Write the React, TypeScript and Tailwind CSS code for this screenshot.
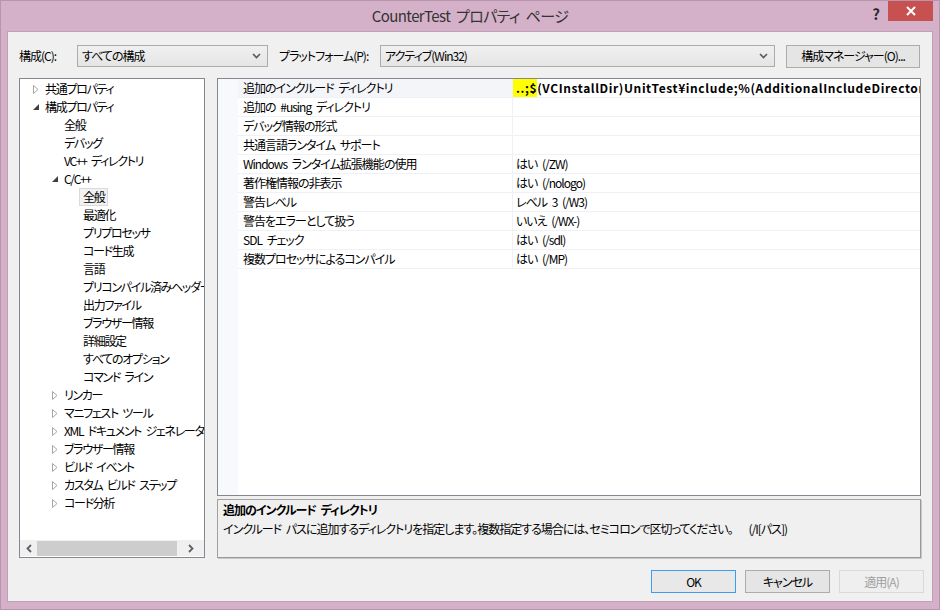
import { ReactNode } from 'react';

type TreeItem = {
  label: string;
  level: 0 | 1 | 2;
  expander?: 'open' | 'closed';
  selected?: boolean;
};

const treeItems: TreeItem[] = [
  { label: '共通プロパティ', level: 0, expander: 'closed' },
  { label: '構成プロパティ', level: 0, expander: 'open' },
  { label: '全般', level: 1 },
  { label: 'デバッグ', level: 1 },
  { label: 'VC++ ディレクトリ', level: 1 },
  { label: 'C/C++', level: 1, expander: 'open' },
  { label: '全般', level: 2, selected: true },
  { label: '最適化', level: 2 },
  { label: 'プリプロセッサ', level: 2 },
  { label: 'コード生成', level: 2 },
  { label: '言語', level: 2 },
  { label: 'プリコンパイル済みヘッダー', level: 2 },
  { label: '出力ファイル', level: 2 },
  { label: 'ブラウザー情報', level: 2 },
  { label: '詳細設定', level: 2 },
  { label: 'すべてのオプション', level: 2 },
  { label: 'コマンド ライン', level: 2 },
  { label: 'リンカー', level: 1, expander: 'closed' },
  { label: 'マニフェスト ツール', level: 1, expander: 'closed' },
  { label: 'XML ドキュメント ジェネレータ', level: 1, expander: 'closed' },
  { label: 'ブラウザー情報', level: 1, expander: 'closed' },
  { label: 'ビルド イベント', level: 1, expander: 'closed' },
  { label: 'カスタム ビルド ステップ', level: 1, expander: 'closed' },
  { label: 'コード分析', level: 1, expander: 'closed' },
];

const indentClass = ['pl-[13px]', 'pl-[32px]', 'pl-[51px]'];

const properties: { name: string; value: ReactNode }[] = [
  {
    name: '追加のインクルード ディレクトリ',
    value: (
      <span className="font-bold tracking-[0.6px]">
        <span className="-ml-[8px] bg-[#ffff00] py-[2px] pl-[8px]">..;$</span>
        (VCInstallDir)UnitTest¥include;%(AdditionalIncludeDirectories)
      </span>
    ),
  },
  { name: '追加の #using ディレクトリ', value: '' },
  { name: 'デバッグ情報の形式', value: '' },
  { name: '共通言語ランタイム サポート', value: '' },
  { name: 'Windows ランタイム拡張機能の使用', value: 'はい (/ZW)' },
  { name: '著作権情報の非表示', value: 'はい (/nologo)' },
  { name: '警告レベル', value: 'レベル 3 (/W3)' },
  { name: '警告をエラーとして扱う', value: 'いいえ (/WX-)' },
  { name: 'SDL チェック', value: 'はい (/sdl)' },
  { name: '複数プロセッサによるコンパイル', value: 'はい (/MP)' },
];

const Chevron = () => (
  <svg width="9" height="6" viewBox="0 0 9 6" className="shrink-0">
    <path d="M1 1 L4.5 4.5 L8 1" fill="none" stroke="#5a5a5a" strokeWidth="1.6" />
  </svg>
);

const Expander = ({ kind }: { kind?: 'open' | 'closed' }) => (
  <span className="flex w-[12px] shrink-0 items-center">
    {kind === 'closed' && (
      <svg width="6" height="9" viewBox="0 0 6 9">
        <path d="M0.5 0.5 L5 4.5 L0.5 8.5 Z" fill="none" stroke="#a6a6a6" strokeWidth="1" />
      </svg>
    )}
    {kind === 'open' && (
      <svg width="6" height="6" viewBox="0 0 6 6">
        <path d="M6 0 L6 6 L0 6 Z" fill="#404040" />
      </svg>
    )}
  </span>
);

const Combo = ({ text, width }: { text: string; width: string }) => (
  <div
    className={`flex h-[22px] ${width} items-center justify-between border border-[#acacac] bg-gradient-to-b from-[#f0f0f0] to-[#e5e5e5] pl-[4px] pr-[6px]`}
  >
    <span>{text}</span>
    <Chevron />
  </div>
);

const DialogButton = ({ children, variant }: { children: ReactNode; variant?: 'default' | 'disabled' }) => (
  <div
    className={`flex h-[23px] w-[85px] items-center justify-center border ${
      variant === 'default'
        ? 'border-[#3c9ef0] bg-[#e8e8e8] text-black'
        : variant === 'disabled'
          ? 'border-[#d9d9d9] bg-[#efefef] text-[#a0a0a0]'
          : 'border-[#acacac] bg-[#e5e5e5] text-black'
    }`}
  >
    {children}
  </div>
);

export default function App() {
  return (
    <div className="flex h-[610px] w-[940px] flex-col border border-[#b995ad] bg-[#d4b1c8] font-['Noto_Sans_CJK_JP',sans-serif] text-[12px] leading-none tracking-[-1px] text-black [font-feature-settings:'palt'] [word-spacing:3px]">
      {/* Caption bar */}
      <div className="relative h-[30px] shrink-0">
        <div className="pt-[7px] text-center text-[15px] tracking-[-0.6px] text-[#333333]">CounterTest プロパティ ページ</div>
        <div className="absolute right-[6px] top-0 flex items-start">
          <span className="mr-[9px] mt-[5px] text-[15px] font-bold text-[#2a2a2a]">?</span>
          <div className="flex h-[20px] w-[45px] items-center justify-center bg-[#c75050]">
            <svg width="10" height="10" viewBox="0 0 10 10">
              <path d="M1 1 L9 9 M9 1 L1 9" stroke="#ffffff" strokeWidth="2" />
            </svg>
          </div>
        </div>
      </div>

      {/* Client area */}
      <div className="mx-[6px] mb-[7px] flex min-w-0 flex-1 flex-col border border-[#bfa0b4] bg-[#f0f0f0] px-[11px] pt-[12px]">
        <div className="flex h-[24px] items-center whitespace-nowrap">
          <span className="w-[58px]">構成(C):</span>
          <Combo text="すべての構成" width="w-[191px]" />
          <span className="ml-[11px] w-[101px]">プラットフォーム(P):</span>
          <Combo text="アクティブ(Win32)" width="w-[395px]" />
          <div className="ml-[11px] flex h-[23px] w-[134px] items-center justify-center border border-[#acacac] bg-[#e5e5e5]">
            構成マネージャー(O)...
          </div>
        </div>

        <div className="mt-[10px] flex h-[480px] gap-[12px]">
          {/* Category tree */}
          <div className="flex w-[186px] shrink-0 flex-col border border-[#828790] bg-white">
            <div className="flex-1 overflow-hidden pt-[1px] tracking-[-1.3px]">
              {treeItems.map((item, i) => (
                <div key={i} className={`flex h-[18px] items-center whitespace-nowrap ${indentClass[item.level]}`}>
                  <Expander kind={item.expander} />
                  {item.selected ? (
                    <span className="-ml-[4px] border border-[#dadada] bg-[#f2f2f2] px-[3px] py-[2px]">{item.label}</span>
                  ) : (
                    <span>{item.label}</span>
                  )}
                </div>
              ))}
            </div>
            <div className="mb-[1px] flex h-[16px] items-center bg-[#f0f0f0]">
              <span className="flex w-[17px] justify-center">
                <svg width="6" height="9" viewBox="0 0 6 9">
                  <path d="M5 1 L1.5 4.5 L5 8" fill="none" stroke="#606060" strokeWidth="1.8" />
                </svg>
              </span>
              <div className="h-[15px] w-[140px] bg-[#cdcdcd]" />
              <span className="flex flex-1 justify-center">
                <svg width="6" height="9" viewBox="0 0 6 9">
                  <path d="M1 1 L4.5 4.5 L1 8" fill="none" stroke="#606060" strokeWidth="1.8" />
                </svg>
              </span>
            </div>
          </div>

          <div className="flex min-w-0 flex-1 flex-col gap-[3px]">
            {/* Property grid */}
            <div className="h-[418px] min-w-0 overflow-hidden border border-[#828790] bg-white">
              <div className="flex h-full">
                <div className="w-[20px] shrink-0 bg-[#f7f9fc]" />
                <div className="flex min-w-0 flex-1 flex-col">
                  {properties.map((p, i) => (
                    <div key={i} className="flex h-[19px] shrink-0 border-b border-[#eef1f6]">
                      <div
                        className={`flex w-[274px] shrink-0 items-center whitespace-nowrap pl-[5px] ${
                          i === 0 ? 'bg-[#f3f5f9]' : ''
                        }`}
                      >
                        {p.name}
                      </div>
                      <div className="flex min-w-0 flex-1 items-center overflow-hidden whitespace-nowrap border-l border-[#eef1f6] pl-[3px]">
                        {p.value}
                      </div>
                    </div>
                  ))}
                </div>
              </div>
            </div>

            {/* Description pane */}
            <div className="flex h-[59px] min-w-0 flex-col gap-[7px] overflow-hidden border border-[#a0a0a0] border-b-[#9a9a9a] border-r-[#9a9a9a] px-[5px] pt-[4px] shadow-[1px_1px_0_#c8c8c8]">
              <span className="font-bold">追加のインクルード ディレクトリ</span>
              <span className="whitespace-nowrap">
                インクルード パスに追加するディレクトリを指定します。複数指定する場合には、セミコロンで区切ってください。
                <span className="ml-[16px]">(/I[パス])</span>
              </span>
            </div>
          </div>
        </div>

        <div className="-mr-[3px] mt-[12px] flex justify-end gap-[9px]">
          <DialogButton variant="default">OK</DialogButton>
          <DialogButton>キャンセル</DialogButton>
          <DialogButton variant="disabled">適用(A)</DialogButton>
        </div>
      </div>
    </div>
  );
}
